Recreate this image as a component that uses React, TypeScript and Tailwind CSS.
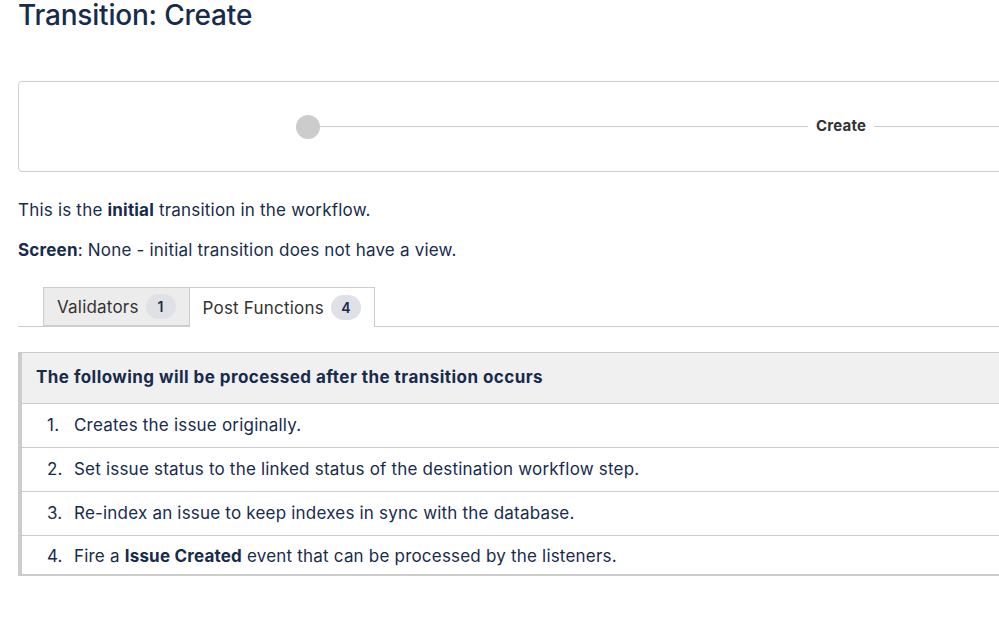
const steps: React.ReactNode[] = [
  "Creates the issue originally.",
  "Set issue status to the linked status of the destination workflow step.",
  "Re-index an issue to keep indexes in sync with the database.",
  <>
    Fire a <b className="font-bold">Issue Created</b> event that can be processed by the listeners.
  </>,
];

const Tab = ({ label, count, active }: { label: string; count: number; active?: boolean }) => (
  <div
    className={
      active
        ? "-mb-px flex h-[40px] items-center gap-[7px] border border-b-0 border-[#cccccc] bg-white pl-[13px] pr-[13px]"
        : "flex h-[39px] items-center gap-[7px] border border-r-0 border-[#cccccc] bg-[#ececec] pl-[13px] pr-[13px]"
    }
  >
    <span className="pt-[2px] text-[17px] tracking-[0.2px] text-[#333333]">{label}</span>
    <span className="flex h-[25px] min-w-[30px] items-center justify-center rounded-full bg-[#dfe1e6] px-[10px] text-[14px] font-semibold text-[#172b4d]">
      {count}
    </span>
  </div>
);

export default function App() {
  return (
    <div className="h-[629px] w-[999px] overflow-hidden bg-white font-['Inter',sans-serif] text-[#172b4d]">
      <div className="w-[1100px] pl-[18px]">
        <h1 className="text-[28px] font-medium leading-[30px] tracking-[-0.2px]">Transition: Create</h1>

        {/* diagram */}
        <div className="mt-[51px] flex h-[91px] items-center rounded-[4px] border border-[#cccccc] pl-[277px]">
          <div className="h-[24px] w-[24px] shrink-0 rounded-full bg-[#cccccc]" />
          <div className="h-px w-[488px] bg-[#cccccc]" />
          <span className="px-[8px] text-[15px] font-bold tracking-[0.2px] text-[#333333]">Create</span>
          <div className="h-px flex-1 bg-[#cccccc]" />
        </div>

        <p className="mt-[26px] text-[17px] leading-[24px] tracking-[0.2px]">
          This is the <b className="font-bold">initial</b> transition in the workflow.
        </p>
        <p className="mt-[16px] text-[17px] leading-[24px] tracking-[0.2px]">
          <b className="font-bold">Screen</b>: None - initial transition does not have a view.
        </p>

        {/* tabs */}
        <div className="mt-[25px] flex items-end border-b border-[#cccccc] pl-[25px]">
          <Tab label="Validators" count={1} />
          <Tab label="Post Functions" count={4} active />
        </div>

        {/* post functions table */}
        <div className="mt-[25px] border-l-[4px] border-[#cccccc]">
          <div className="flex h-[52px] items-center border-y border-[#cccccc] bg-[#f0f0f0] pl-[14px] text-[17px] font-bold tracking-[0.45px]">
            The following will be processed after the transition occurs
          </div>
          {steps.map((s, i) => (
            <div
              key={i}
              className={
                i === steps.length - 1
                  ? "flex h-[40px] items-center border-b-2 border-[#cccccc] pt-[4px] text-[17px] tracking-[0.2px]"
                  : "flex h-[44px] items-center border-b border-[#cccccc] text-[17px] tracking-[0.2px]"
              }
            >
              <span className="w-[52px] shrink-0 pl-[25px]">{i + 1}.</span>
              <span>{s}</span>
            </div>
          ))}
        </div>
      </div>
    </div>
  );
}
